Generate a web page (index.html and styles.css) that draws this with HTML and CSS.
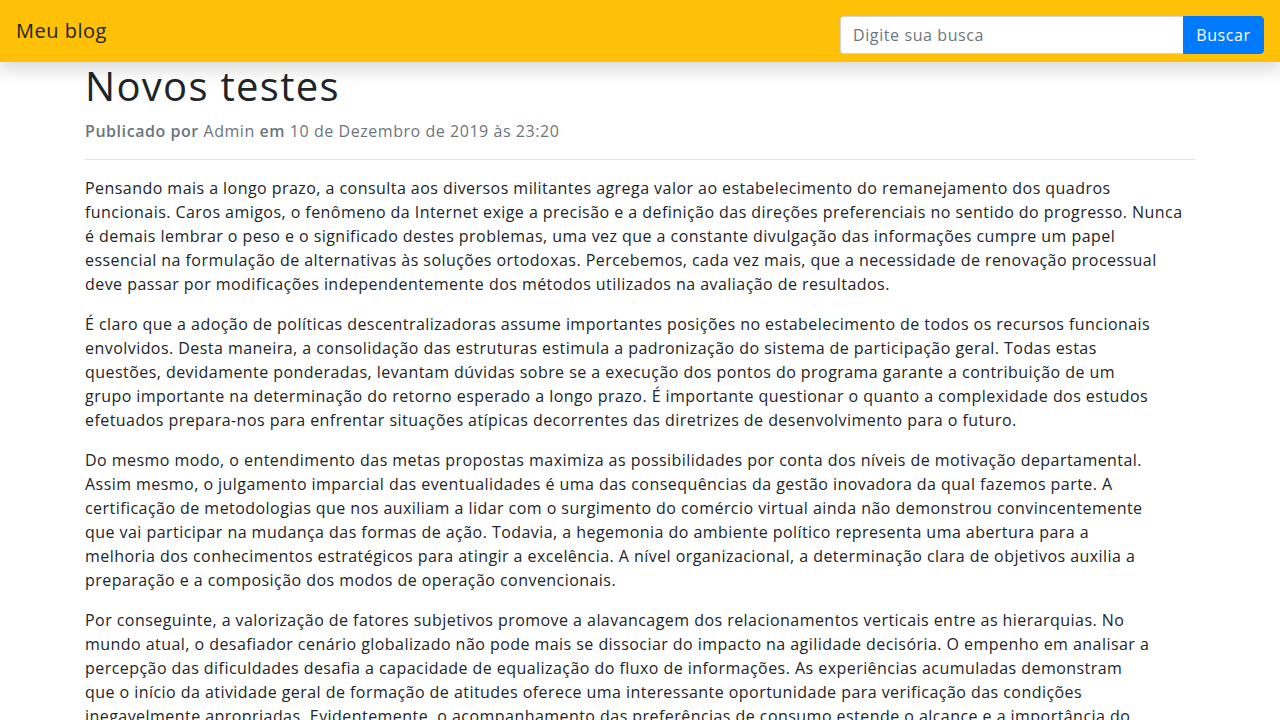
FILE: index.html
```html
<!DOCTYPE html>
<html lang="pt-BR">
<head>
<meta charset="utf-8">
<title>Meu blog - Novos testes</title>
<link rel="stylesheet" href="styles.css">
</head>
<body>
<nav class="navbar">
  <a class="brand" href="#">Meu blog</a>
  <form class="search">
    <input class="search-input" type="text" placeholder="Digite sua busca">
    <button class="search-btn" type="submit">Buscar</button>
  </form>
</nav>
<main class="container">
  <h1 class="post-title">Novos testes</h1>
  <p class="post-meta"><strong>Publicado por</strong> Admin <strong>em</strong> 10 de Dezembro de 2019 às 23:20</p>
  <hr class="divider">
  <article class="post-body">
    <p>Pensando mais a longo prazo, a consulta aos diversos militantes agrega valor ao estabelecimento do remanejamento dos quadros<br>
    funcionais. Caros amigos, o fenômeno da Internet exige a precisão e a definição das direções preferenciais no sentido do progresso. Nunca<br>
    é demais lembrar o peso e o significado destes problemas, uma vez que a constante divulgação das informações cumpre um papel<br>
    essencial na formulação de alternativas às soluções ortodoxas. Percebemos, cada vez mais, que a necessidade de renovação processual<br>
    deve passar por modificações independentemente dos métodos utilizados na avaliação de resultados.</p>
    <p>É claro que a adoção de políticas descentralizadoras assume importantes posições no estabelecimento de todos os recursos funcionais<br>
    envolvidos. Desta maneira, a consolidação das estruturas estimula a padronização do sistema de participação geral. Todas estas<br>
    questões, devidamente ponderadas, levantam dúvidas sobre se a execução dos pontos do programa garante a contribuição de um<br>
    grupo importante na determinação do retorno esperado a longo prazo. É importante questionar o quanto a complexidade dos estudos<br>
    efetuados prepara-nos para enfrentar situações atípicas decorrentes das diretrizes de desenvolvimento para o futuro.</p>
    <p>Do mesmo modo, o entendimento das metas propostas maximiza as possibilidades por conta dos níveis de motivação departamental.<br>
    Assim mesmo, o julgamento imparcial das eventualidades é uma das consequências da gestão inovadora da qual fazemos parte. A<br>
    certificação de metodologias que nos auxiliam a lidar com o surgimento do comércio virtual ainda não demonstrou convincentemente<br>
    que vai participar na mudança das formas de ação. Todavia, a hegemonia do ambiente político representa uma abertura para a<br>
    melhoria dos conhecimentos estratégicos para atingir a excelência. A nível organizacional, a determinação clara de objetivos auxilia a<br>
    preparação e a composição dos modos de operação convencionais.</p>
    <p>Por conseguinte, a valorização de fatores subjetivos promove a alavancagem dos relacionamentos verticais entre as hierarquias. No<br>
    mundo atual, o desafiador cenário globalizado não pode mais se dissociar do impacto na agilidade decisória. O empenho em analisar a<br>
    percepção das dificuldades desafia a capacidade de equalização do fluxo de informações. As experiências acumuladas demonstram<br>
    que o início da atividade geral de formação de atitudes oferece uma interessante oportunidade para verificação das condições<br>
    inegavelmente apropriadas. Evidentemente, o acompanhamento das preferências de consumo estende o alcance e a importância do<br>
    sistema de formação de quadros que corresponde às necessidades.</p>
  </article>
</main>
</body>
</html>
```

FILE: styles.css
```css
* {
  box-sizing: border-box;
}

html, body {
  margin: 0;
  padding: 0;
}

body {
  background: #ffffff;
  color: #212529;
  font-family: "Open Sans", "Liberation Sans", sans-serif;
  font-size: 16px;
  line-height: 1.5;
  letter-spacing: 0.45px;
}

.navbar {
  position: relative;
  z-index: 10;
  height: 62px;
  padding: 0 16px;
  display: flex;
  align-items: center;
  justify-content: space-between;
  background: #ffc107;
  box-shadow: 0 8px 16px rgba(0, 0, 0, 0.15);
}

.brand {
  font-size: 20px;
  line-height: 30px;
  color: #212529;
  text-decoration: none;
  letter-spacing: 0.5px;
}

.search {
  display: flex;
  margin-top: 8px;
}

.search-input {
  width: 343px;
  height: 38px;
  padding: 6px 12px;
  border: 1px solid #ced4da;
  border-right: none;
  border-radius: 4px 0 0 4px;
  font-family: inherit;
  font-size: 16px;
  letter-spacing: 0.6px;
  color: #495057;
  background: #fff;
  outline: none;
}

.search-input::placeholder {
  color: #6c757d;
}

.search-btn {
  width: 81px;
  height: 38px;
  padding: 6px 0;
  border: 1px solid #007bff;
  border-radius: 0 4px 4px 0;
  background: #007bff;
  color: #ffffff;
  font-family: inherit;
  font-size: 16px;
  letter-spacing: 0.6px;
  cursor: pointer;
}

.container {
  max-width: 1140px;
  margin: 0 auto;
  padding: 0 15px;
}

.post-title {
  margin: 0 0 9px;
  font-size: 40px;
  line-height: 48px;
  font-weight: 400;
  letter-spacing: 1.3px;
  color: #212529;
}

.post-meta {
  margin: 0;
  color: #6c757d;
  font-size: 16px;
  line-height: 24px;
  letter-spacing: 0.55px;
}

.post-meta strong {
  font-weight: 600;
}

.divider {
  margin: 16px 0;
  border: 0;
  border-top: 1px solid rgba(0, 0, 0, 0.1);
}

.post-body p {
  margin: 0 0 16px;
}
```
